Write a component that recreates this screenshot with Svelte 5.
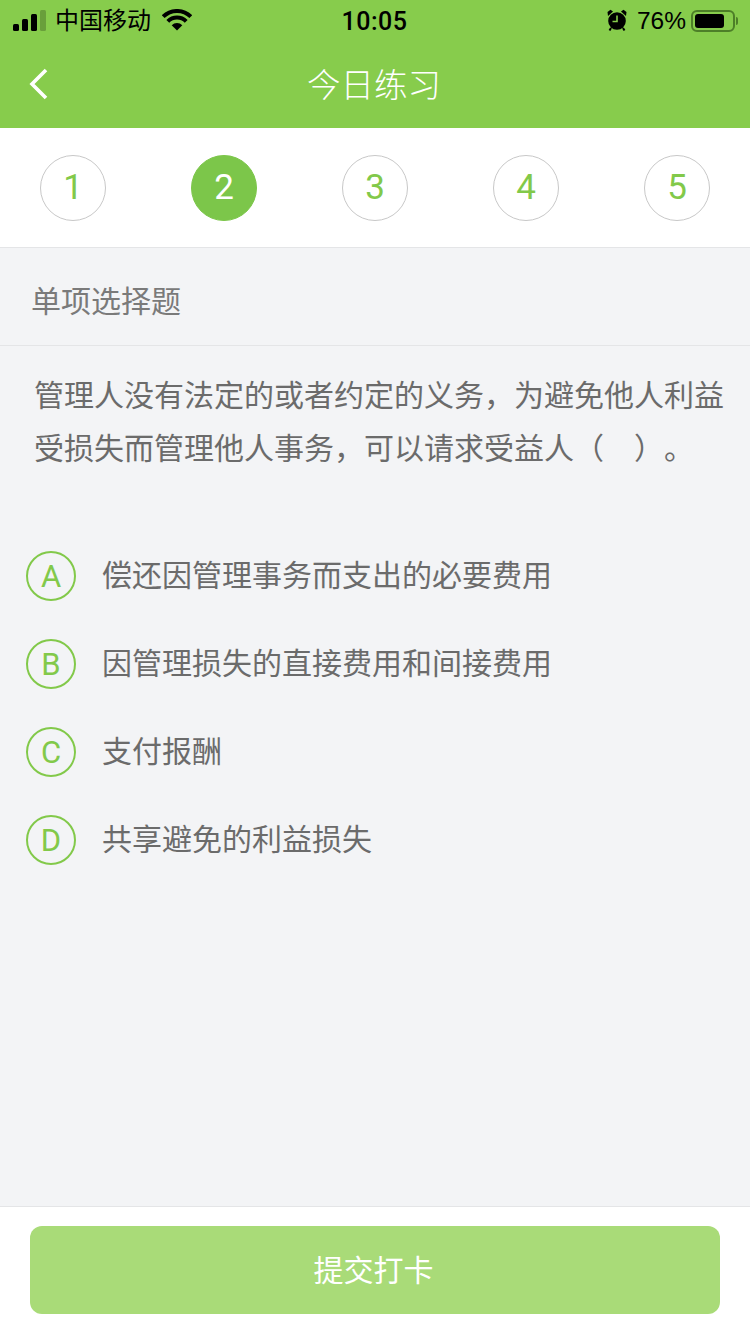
<script>
  const steps = [1, 2, 3, 4, 5];
  const current = 2;
  const options = [
    { key: 'A', text: '偿还因管理事务而支出的必要费用' },
    { key: 'B', text: '因管理损失的直接费用和间接费用' },
    { key: 'C', text: '支付报酬' },
    { key: 'D', text: '共享避免的利益损失' }
  ];
</script>

<div class="page">
  <header class="top">
    <div class="status">
      <div class="status-left">
        <svg class="signal" width="34" height="22" viewBox="0 0 34 22">
          <rect x="0" y="15" width="6" height="7" rx="1.5" fill="#000" />
          <rect x="9" y="10" width="6" height="12" rx="1.5" fill="#000" />
          <rect x="18" y="5" width="6" height="17" rx="1.5" fill="#000" />
          <rect x="27" y="1" width="6" height="21" rx="1.5" fill="#000" opacity="0.22" />
        </svg>
        <span class="carrier">中国移动</span>
        <svg class="wifi" width="30" height="22" viewBox="0 0 30 22">
          <path d="M1.2 7.7 A19.5 19.5 0 0 1 28.8 7.7" fill="none" stroke="#000" stroke-width="4" />
          <path d="M5.8 12.3 A13 13 0 0 1 24.2 12.3" fill="none" stroke="#000" stroke-width="4" />
          <path d="M15 21.5 L9.7 16.2 A7.5 7.5 0 0 1 20.3 16.2 Z" fill="#000" />
        </svg>
      </div>
      <span class="time">10:05</span>
      <div class="status-right">
        <svg class="alarm" width="20" height="22" viewBox="0 0 20 22">
          <path d="M1 7 L6 2.5 L3.5 0.8 L0.5 3 Z M19 7 L14 2.5 L16.5 0.8 L19.5 3 Z" fill="#000" />
          <path d="M4 19 L2.5 21.5 M16 19 L17.5 21.5" stroke="#000" stroke-width="2" />
          <circle cx="10" cy="12" r="8.8" fill="#000" />
          <path d="M10 6.5 V12.5 H5.5" fill="none" stroke="#88cd4d" stroke-width="1.6" />
        </svg>
        <span class="percent">76%</span>
        <div class="battery"><div class="level"></div></div>
        <div class="nub"></div>
      </div>
    </div>
    <div class="nav">
      <svg class="back" width="20" height="32" viewBox="0 0 20 32">
        <path d="M17 2 L3 16 L17 30" fill="none" stroke="#fff" stroke-width="3.6" />
      </svg>
      <h1>今日练习</h1>
    </div>
  </header>

  <div class="steps">
    {#each steps as n}
      <div class="step" class:active={n === current}>{n}</div>
    {/each}
  </div>

  <div class="type">单项选择题</div>

  <main class="body">
    <p class="question">管理人没有法定的或者约定的义务，为避免他人利益受损失而管理他人事务，可以请求受益人（　）。</p>

    <ul class="options">
      {#each options as opt}
        <li>
          <span class="key">{opt.key}</span>
          <span class="text">{opt.text}</span>
        </li>
      {/each}
    </ul>
  </main>

  <footer class="foot">
    <button class="submit">提交打卡</button>
  </footer>
</div>

<style>
  :global(body) {
    margin: 0;
    background: #f3f4f6;
  }

  .page {
    width: 750px;
    height: 1334px;
    display: flex;
    flex-direction: column;
    font-family: "Liberation Sans", "Noto Sans CJK SC", sans-serif;
    background: #f3f4f6;
    overflow: hidden;
  }

  .top {
    height: 128px;
    background: #87cc4c;
    flex: none;
  }

  .status {
    height: 40px;
    display: grid;
    grid-template-columns: 1fr auto 1fr;
    align-items: center;
    padding: 0 13px;
    color: #000;
  }

  .status-left {
    display: flex;
    align-items: center;
  }

  .signal { margin-top: -1px; }

  .carrier {
    font-size: 24px;
    line-height: 40px;
    margin-left: 8px;
    padding-top: 1px;
  }

  .wifi { margin-left: 11px; margin-top: -2px; }

  .time {
    font-size: 25px;
    font-weight: 500;
    font-family: Roboto, sans-serif;
    letter-spacing: 0.5px;
    margin-left: -1px;
    padding-top: 1px;
  }

  .status-right {
    display: flex;
    align-items: center;
    justify-content: flex-end;
  }

  .alarm { margin-right: 10px; margin-top: -2px; }

  .percent {
    font-size: 24.5px;
    margin-right: 5px;
    padding-top: 1px;
  }

  .battery {
    width: 44px;
    height: 22px;
    box-sizing: border-box;
    border: 2px solid #4d7f28;
    border-radius: 6px;
    padding: 2px;
  }

  .level {
    width: 29px;
    height: 14px;
    background: #000;
    border-radius: 3px;
  }

  .nub {
    width: 2px;
    height: 8px;
    margin-left: 1px;
    margin-right: -1px;
    background: #4d7f28;
    border-radius: 0 2px 2px 0;
  }

  .nav {
    height: 88px;
    position: relative;
    display: flex;
    align-items: center;
    justify-content: center;
  }

  .back {
    position: absolute;
    left: 29px;
    top: 28px;
  }

  h1 {
    margin: -3px 2px 0 0;
    font-size: 33.5px;
    font-weight: 300;
    color: #fff;
  }

  .steps {
    box-sizing: border-box;
    flex: none;
    display: flex;
    justify-content: space-between;
    align-items: flex-start;
    padding: 27px 40px 0;
    background: #fff;
    border-bottom: 1px solid #e4e5e7;
    height: 120px;
  }

  .step {
    width: 66px;
    height: 66px;
    box-sizing: border-box;
    border: 1px solid #c8c8c8;
    border-radius: 50%;
    display: flex;
    align-items: center;
    justify-content: center;
    padding-bottom: 1px;
    font-family: Roboto, sans-serif;
    font-weight: 400;
    font-size: 35px;
    color: #82c94a;
  }

  .step.active {
    background: #7cc64a;
    border-color: #7cc64a;
    color: #fff;
  }

  .type {
    height: 98px;
    box-sizing: border-box;
    flex: none;
    padding: 4px 0 0 31px;
    display: flex;
    align-items: center;
    font-size: 30px;
    color: #7a7a7a;
    border-bottom: 1px solid #e4e5e7;
  }

  .body {
    flex: 1;
    min-height: 0;
  }

  .question {
    margin: 23px 25px 0 34px;
    font-size: 30px;
    line-height: 53px;
    color: #6b6b6b;
    text-spacing-trim: space-all;
  }

  .options {
    list-style: none;
    margin: 57px 0 0;
    padding: 0 0 0 26px;
  }

  .options li {
    height: 88px;
    display: flex;
    align-items: center;
  }

  .key {
    width: 50px;
    height: 50px;
    box-sizing: border-box;
    border: 2px solid #82c94a;
    border-radius: 50%;
    display: flex;
    align-items: center;
    justify-content: center;
    font-family: Roboto, sans-serif;
    font-weight: 400;
    font-size: 31px;
    color: #82c94a;
  }

  .text {
    margin-left: 26px;
    padding-bottom: 6px;
    font-size: 30px;
    color: #6b6b6b;
  }

  .foot {
    flex: none;
    height: 128px;
    box-sizing: border-box;
    padding: 19px 30px 0;
    background: #fff;
    border-top: 1px solid #e4e5e7;
  }

  .submit {
    display: block;
    width: 100%;
    height: 88px;
    padding: 0 3px 4px 0;
    border: none;
    border-radius: 12px;
    background: #a9db78;
    color: #fff;
    font-family: inherit;
    font-size: 30px;
  }
</style>
